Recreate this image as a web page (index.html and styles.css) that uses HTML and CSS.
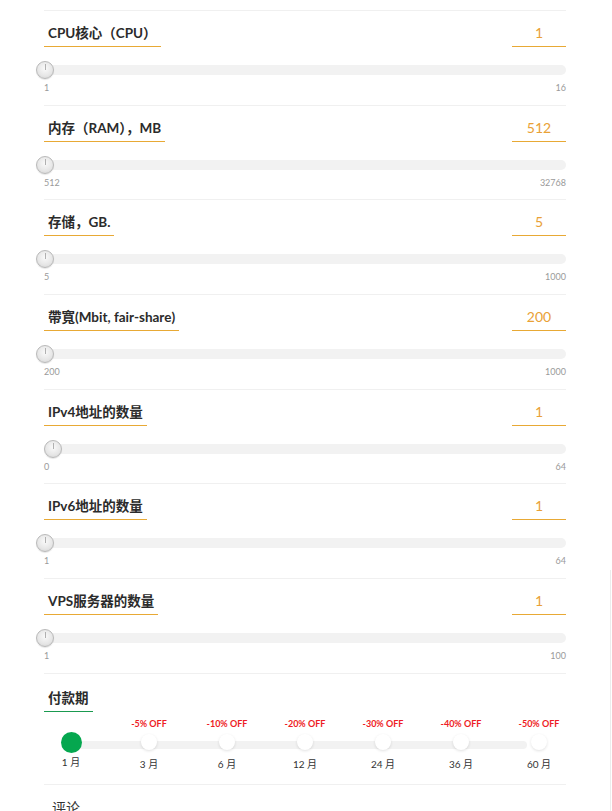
FILE: index.html
```html
<!DOCTYPE html>
<html lang="zh">
<head>
    <meta charset="UTF-8">
    <meta name="viewport" content="width=device-width, initial-scale=1.0">
    <title>VPS 配置</title>
    <link rel="stylesheet" href="styles.css">
</head>
<body>
    <div class="side-edge"></div>

    <div class="config">
        <!-- CPU -->
        <div class="row">
            <div class="row-head">
                <span class="label">CPU核心（CPU）</span>
                <span class="value">1</span>
            </div>
            <div class="slider"><span class="handle" style="left: 0%"></span></div>
            <div class="range"><span>1</span><span>16</span></div>
        </div>

        <!-- RAM -->
        <div class="row">
            <div class="row-head">
                <span class="label">内存（RAM），MB</span>
                <span class="value">512</span>
            </div>
            <div class="slider"><span class="handle" style="left: 0%"></span></div>
            <div class="range"><span>512</span><span>32768</span></div>
        </div>

        <!-- Storage -->
        <div class="row">
            <div class="row-head">
                <span class="label">存储，GB.</span>
                <span class="value">5</span>
            </div>
            <div class="slider"><span class="handle" style="left: 0%"></span></div>
            <div class="range"><span>5</span><span>1000</span></div>
        </div>

        <!-- Bandwidth -->
        <div class="row">
            <div class="row-head">
                <span class="label">帶寬(Mbit, fair-share)</span>
                <span class="value">200</span>
            </div>
            <div class="slider"><span class="handle" style="left: 0%"></span></div>
            <div class="range"><span>200</span><span>1000</span></div>
        </div>

        <!-- IPv4 -->
        <div class="row">
            <div class="row-head">
                <span class="label">IPv4地址的数量</span>
                <span class="value">1</span>
            </div>
            <div class="slider"><span class="handle" style="left: 1.5625%"></span></div>
            <div class="range"><span>0</span><span>64</span></div>
        </div>

        <!-- IPv6 -->
        <div class="row">
            <div class="row-head">
                <span class="label">IPv6地址的数量</span>
                <span class="value">1</span>
            </div>
            <div class="slider"><span class="handle" style="left: 0%"></span></div>
            <div class="range"><span>1</span><span>64</span></div>
        </div>

        <!-- VPS count -->
        <div class="row">
            <div class="row-head">
                <span class="label">VPS服务器的数量</span>
                <span class="value">1</span>
            </div>
            <div class="slider"><span class="handle" style="left: 0%"></span></div>
            <div class="range"><span>1</span><span>100</span></div>
        </div>

        <!-- Payment period -->
        <div class="row period">
            <div class="row-head">
                <span class="label green">付款期</span>
            </div>
            <div class="steps">
                <div class="step active"><span class="off"></span><span class="dot"></span><span class="month">1 月</span></div>
                <div class="step"><span class="off">-5% OFF</span><span class="dot"></span><span class="month">3 月</span></div>
                <div class="step"><span class="off">-10% OFF</span><span class="dot"></span><span class="month">6 月</span></div>
                <div class="step"><span class="off">-20% OFF</span><span class="dot"></span><span class="month">12 月</span></div>
                <div class="step"><span class="off">-30% OFF</span><span class="dot"></span><span class="month">24 月</span></div>
                <div class="step"><span class="off">-40% OFF</span><span class="dot"></span><span class="month">36 月</span></div>
                <div class="step"><span class="off">-50% OFF</span><span class="dot"></span><span class="month">60 月</span></div>
            </div>
        </div>

        <div class="row comment">
            <span class="comment-title">评论</span>
        </div>
    </div>
</body>
</html>
```

FILE: styles.css
```css
body {
    margin: 0;
    padding: 0;
    background: #fff;
    font-family: Lato, "Noto Sans CJK SC", sans-serif;
    color: #333;
}
.side-edge {
    position: absolute;
    left: 610px;
    top: 570px;
    width: 1px;
    height: 260px;
    background: #ececec;
}
.config {
    width: 522px;
    margin-left: 44px;
    padding-top: 10px;
}
.row {
    border-top: 1px solid #f0f0f0;
    padding-bottom: 11px;
}
.row:nth-child(2),
.row:nth-child(5) {
    padding-bottom: 10px;
}
.row-head {
    display: flex;
    justify-content: space-between;
    align-items: flex-end;
    padding-top: 14px;
}
.label {
    font-size: 13.5px;
    font-weight: bold;
    line-height: 16px;
    padding: 0 4px 5px;
    border-bottom: 1px solid #e8a935;
    color: #2b2b2b;
}
.label.green {
    border-bottom-color: #1a9a50;
}
.value {
    width: 54px;
    text-align: center;
    font-size: 14px;
    line-height: 16px;
    padding-bottom: 5px;
    border-bottom: 1px solid #e8a935;
    color: #e9a136;
}
.slider {
    position: relative;
    height: 10px;
    margin: 18px 0 7px;
    background: #f2f2f2;
    border-radius: 5px;
}
.handle {
    position: absolute;
    top: 50%;
    width: 16px;
    height: 16px;
    margin: -9px 0 0 -8px;
    border: 1px solid #b9b9b9;
    border-radius: 50%;
    background: radial-gradient(circle at 50% 40%, #fafafa 0%, #e6e6e6 60%, #cfcfcf 100%);
    box-shadow: 0 1px 1px rgba(0, 0, 0, 0.1);
}
.handle::after {
    content: "";
    position: absolute;
    left: 7.5px;
    top: 2px;
    width: 1px;
    height: 6px;
    background: #b0b0b0;
}
.range {
    display: flex;
    justify-content: space-between;
    font-size: 9px;
    line-height: 12px;
    color: #9a9a9a;
}
/* Payment period */
.row.period {
    padding-bottom: 13px;
}
.period .row-head {
    padding-top: 16px;
}
.steps {
    position: relative;
    display: grid;
    grid-template-columns: repeat(7, 78px);
    margin: 4px 0 0 -12px;
}
.steps::before {
    content: "";
    position: absolute;
    left: 39px;
    right: 39px;
    top: 29px;
    height: 8px;
    margin-top: -4px;
    background: #f2f2f2;
    border-radius: 4px;
}
.step {
    position: relative;
    display: flex;
    flex-direction: column;
    align-items: center;
}
.off {
    height: 14px;
    font-size: 9px;
    line-height: 16px;
    font-weight: bold;
    color: #ee1c25;
}
.dot {
    width: 16px;
    height: 16px;
    margin: 4px 0 3px;
    border-radius: 50%;
    background: #fff;
    box-shadow: 0 1px 3px rgba(0, 0, 0, 0.12);
}
.step.active .dot {
    width: 21px;
    height: 21px;
    margin: 1.5px 0 0.5px;
    background: #05a74f;
    box-shadow: none;
}
.month {
    margin-top: 4px;
    font-size: 10px;
    line-height: 14px;
    color: #333;
}
.step.active .month {
    margin-top: 2px;
}
.comment {
    padding-top: 12px;
    padding-left: 8px;
}
.comment-title {
    font-size: 14px;
    line-height: 18px;
}
```
